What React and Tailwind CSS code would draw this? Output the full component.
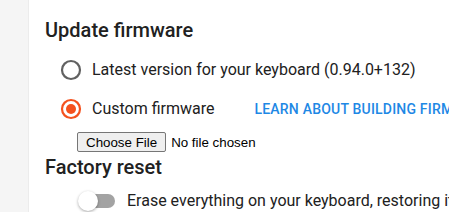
import React from 'react';

const Radio = ({ checked }) => (
  <span className="flex h-[20px] w-[20px] items-center justify-center">
    {checked ? (
      <svg viewBox="0 0 24 24" className="h-[24px] w-[24px] shrink-0">
        <circle cx="12" cy="12" r="9" fill="none" stroke="#f4511e" strokeWidth="2.2" />
        <circle cx="12" cy="12" r="5" fill="#f4511e" />
      </svg>
    ) : (
      <svg viewBox="0 0 24 24" className="h-[24px] w-[24px] shrink-0">
        <circle cx="12" cy="12" r="9" fill="none" stroke="#616161" strokeWidth="2.2" />
      </svg>
    )}
  </span>
);

const App = () => {
  return (
    <div className="flex h-[212px] w-[449px] overflow-hidden bg-white font-['Roboto',sans-serif] text-[#212121]">
      <div className="w-[29px] shrink-0 border-r border-[#ececec] bg-[#f5f5f5]" />
      <div className="flex-1 whitespace-nowrap pl-[16px] pt-[15px]">
        <h2 className="text-[20px] font-medium leading-[30px]">Update firmware</h2>
        <div className="mt-[15px] flex flex-col gap-[19px] pl-[16px]">
          <label className="flex items-center gap-[11px]">
            <Radio />
            <span className="text-[16px] leading-[20px]">Latest version for your keyboard (0.94.0+132)</span>
          </label>
          <div className="flex items-center">
            <label className="flex items-center gap-[11px]">
              <Radio checked />
              <span className="text-[16px] leading-[20px]">Custom firmware</span>
            </label>
            <span className="ml-[40px] text-[14px] font-medium uppercase leading-[20px] tracking-[0.2px] text-[#1e88e5]">
              Learn about building firmware
            </span>
          </div>
        </div>
        <div className="mt-[11px] pl-[32px]">
          <input
            type="file"
            className="font-['Liberation_Sans',Arial,sans-serif] text-[13.33px] text-black file:mr-[5px] file:h-[20px] file:rounded-[2px] file:border file:border-[#767676] file:bg-[#efefef] file:px-[8px] file:text-[13.33px] file:text-black"
          />
        </div>
        <h2 className="-mt-[2px] text-[20px] font-medium leading-[30px]">Factory reset</h2>
        <div className="mt-[9px] flex items-center pl-[33px]">
          <span className="relative flex h-[20px] w-[37px] items-center">
            <span className="ml-[2px] h-[14px] w-[35px] rounded-full bg-[#a3a3a3]" />
            <span className="absolute left-0 top-0 h-[20px] w-[20px] rounded-full bg-white shadow-[0_1px_3px_rgba(0,0,0,0.35)]" />
          </span>
          <span className="ml-[12px] text-[16px] leading-[20px]">
            Erase everything on your keyboard, restoring it to factory settings
          </span>
        </div>
      </div>
    </div>
  );
};

export default App;
